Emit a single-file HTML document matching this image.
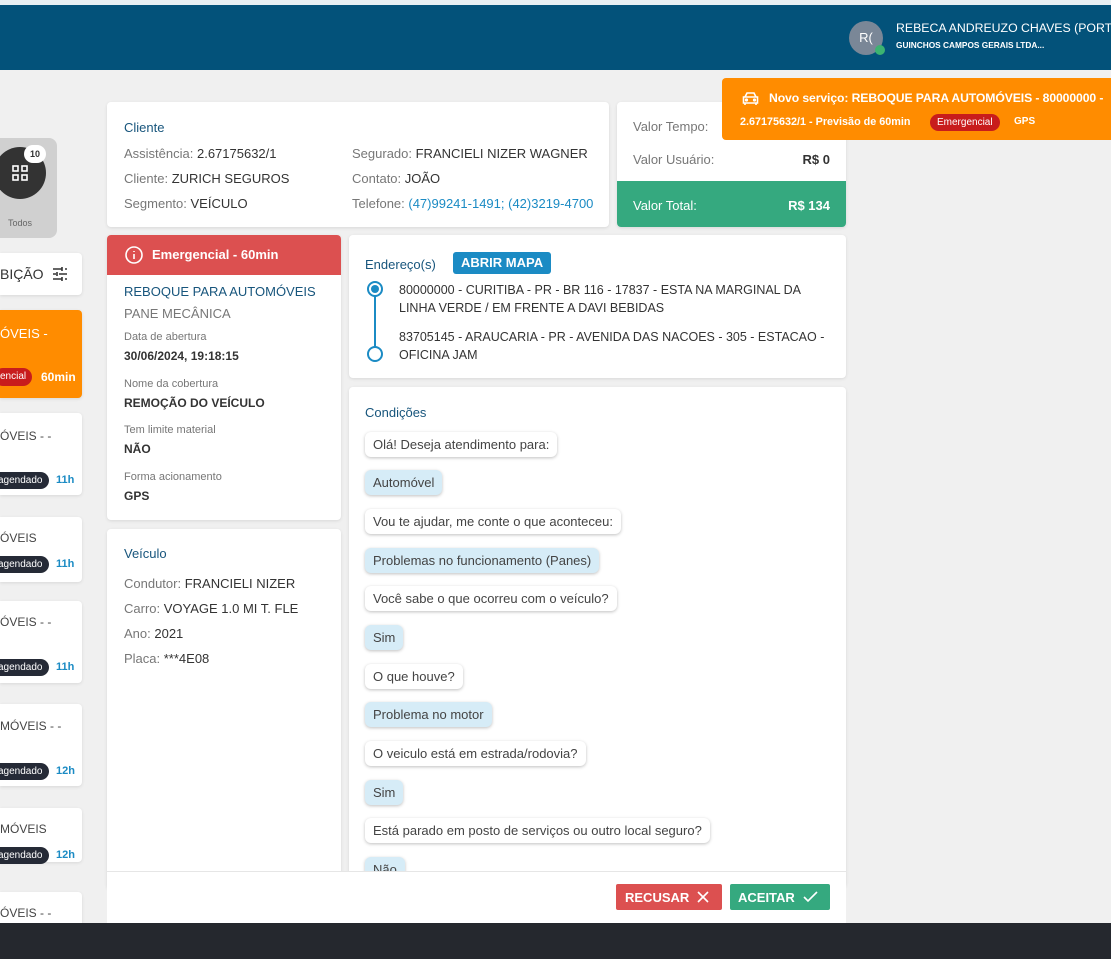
<!DOCTYPE html>
<html><head><meta charset="utf-8">
<style>
*{box-sizing:border-box;margin:0;padding:0}
body{width:1111px;height:959px;overflow:hidden;background:#f0f0f0;font-family:"Liberation Sans",sans-serif;font-size:13px;color:#444;position:relative}
.a{position:absolute}
.card{position:absolute;background:#fff;border-radius:4px;box-shadow:0 1px 3px rgba(0,0,0,.1)}
.t{color:#17557c;font-size:13px}
.g{color:#777}
.dk{color:#333}
.bub{position:absolute;left:365px;background:#fff;border-radius:6px;box-shadow:0 1px 3px rgba(0,0,0,.25);padding:0 8px;height:25px;line-height:25px;font-size:13px;color:#444;white-space:nowrap}
.ans{background:#d6ecf7;color:#444}
.side{position:absolute;left:0;width:82px;background:#fff;border-radius:0 4px 4px 0;box-shadow:0 1px 3px rgba(0,0,0,.1);font-size:12px;color:#444}
.pill{position:absolute;left:-8px;background:#252a36;color:#fff;font-size:10px;height:17px;line-height:17px;border-radius:9px;padding:0 6px 0 6px}
.hr{position:absolute;left:56px;color:#1b8bc4;font-weight:bold;font-size:11px}
</style></head><body>
<div class="a" style="left:0;top:0;width:1111px;height:5px;background:#e8f0f4"></div>
<div class="a" style="left:0;top:5px;width:1111px;height:65px;background:#03527a"></div>
<div class="a" style="left:849px;top:21px;width:34px;height:34px;border-radius:50%;background:#7a8797;color:#fff;font-size:13px;text-align:center;line-height:34px">R(</div>
<div class="a" style="left:875px;top:45px;width:10px;height:10px;border-radius:50%;background:#3cb371"></div>
<div class="a" style="left:896px;top:21px;color:#fff;font-size:12.3px;white-space:nowrap">REBECA ANDREUZO CHAVES (PORT...</div>
<div class="a" style="left:896px;top:40px;color:#fff;font-size:8.3px;font-weight:bold;white-space:nowrap">GUINCHOS CAMPOS GERAIS LTDA...</div>

<!-- sidebar -->
<div class="a" style="left:-20px;top:138px;width:77px;height:100px;background:#d0d0d0;border-radius:8px"></div>
<div class="a" style="left:-6px;top:147px;width:52px;height:52px;border-radius:50%;background:#333"></div>
<svg class="a" style="left:12px;top:165px" width="16" height="16" viewBox="0 0 16 16" fill="none" stroke="#fff" stroke-width="1.6"><rect x="1" y="1" width="5" height="5"/><rect x="10" y="1" width="5" height="5"/><rect x="1" y="10" width="5" height="5"/><rect x="10" y="10" width="5" height="5"/></svg>
<div class="a" style="left:24px;top:145px;width:22px;height:18px;border-radius:9px;background:#fff;color:#333;font-size:9px;font-weight:bold;text-align:center;line-height:18px">10</div>
<div class="a" style="left:8px;top:218px;font-size:9px;color:#666">Todos</div>
<div class="side" style="top:253px;height:42px"><span class="a" style="left:0;top:13px;font-size:14px;color:#333">BIÇÃO</span>
<svg class="a" style="left:51px;top:12px" width="18" height="18" viewBox="0 0 18 18" stroke="#333" stroke-width="1.6"><path d="M2 4h9M14 4h2M11 2v4M2 9h3M8 9h8M6 7v4M2 14h9M14 14h2M11 12v4"/></svg></div>
<div class="side" style="top:310px;height:88px;background:#ff8c00;color:#fff"><span class="a" style="left:0;top:16px;font-size:13px">ÓVEIS -</span>
<span class="a" style="left:-6px;top:58px;background:#c81c1c;height:18px;line-height:18px;padding:0 6px;border-radius:9px;font-size:10px">encial</span><span class="a" style="left:41px;top:60px;font-weight:bold;font-size:12px">60min</span></div>
<div class="side" style="top:413px;height:82px"><span class="a" style="left:0;top:16px">ÓVEIS - -</span><span class="pill" style="top:59px">agendado</span><span class="hr" style="top:61px">11h</span></div>
<div class="side" style="top:517px;height:65px"><span class="a" style="left:0;top:14px">ÓVEIS</span><span class="pill" style="top:39px">agendado</span><span class="hr" style="top:41px">11h</span></div>
<div class="side" style="top:601px;height:82px"><span class="a" style="left:0;top:14px">ÓVEIS - -</span><span class="pill" style="top:58px">agendado</span><span class="hr" style="top:60px">11h</span></div>
<div class="side" style="top:704px;height:82px"><span class="a" style="left:0;top:15px">MÓVEIS - -</span><span class="pill" style="top:59px">agendado</span><span class="hr" style="top:61px">12h</span></div>
<div class="side" style="top:808px;height:54px"><span class="a" style="left:0;top:14px">MÓVEIS</span><span class="pill" style="top:39px">agendado</span><span class="hr" style="top:41px">12h</span></div>
<div class="side" style="top:892px;height:60px"><span class="a" style="left:0;top:14px">ÓVEIS - -</span></div>

<!-- cliente -->
<div class="card" style="left:107px;top:102px;width:502px;height:125px">
<div class="a t" style="left:17px;top:18px">Cliente</div>
<div class="a g" style="left:17px;top:44px">Assistência: <span class="dk">2.67175632/1</span></div>
<div class="a g" style="left:17px;top:69px">Cliente: <span class="dk">ZURICH SEGUROS</span></div>
<div class="a g" style="left:17px;top:94px">Segmento: <span class="dk">VEÍCULO</span></div>
<div class="a g" style="left:245px;top:44px">Segurado: <span class="dk">FRANCIELI NIZER WAGNER</span></div>
<div class="a g" style="left:245px;top:69px">Contato: <span class="dk">JOÃO</span></div>
<div class="a g" style="left:245px;top:94px;white-space:nowrap">Telefone: <span style="color:#1b8bc4">(47)99241-1491; (42)3219-4700</span></div>
</div>
<div class="card" style="left:617px;top:102px;width:229px;height:125px;overflow:hidden">
<div class="a g" style="left:16px;top:17px">Valor Tempo:</div>
<div class="a g" style="left:16px;top:50px">Valor Usuário:</div>
<div class="a dk" style="right:16px;top:50px;font-weight:bold">R$ 0</div>
<div class="a" style="left:0;top:79px;width:229px;height:46px;background:#35a97f;color:#fff"><span class="a" style="left:16px;top:17px">Valor Total:</span><span class="a" style="right:16px;top:17px;font-weight:bold">R$ 134</span></div>
</div>

<!-- toast -->
<div class="a" style="left:722px;top:78px;width:400px;height:62px;background:#ff8c00;border-radius:4px 0 0 4px;color:#fff">
<svg class="a" style="left:20px;top:13px" width="17" height="15" viewBox="0 0 17 15" fill="none" stroke="#fff" stroke-width="1.6"><path d="M3 6l2-4h7l2 4M1.5 6h14v6h-14zM3 12v2M14 12v2"/><circle cx="4.5" cy="9" r=".8" fill="#fff"/><circle cx="12.5" cy="9" r=".8" fill="#fff"/></svg>
<div class="a" style="left:47px;top:13px;font-weight:bold;font-size:12.2px;white-space:nowrap;letter-spacing:-0.1px">Novo serviço: REBOQUE PARA AUTOMÓVEIS - 80000000 -</div>
<div class="a" style="left:18px;top:38px;font-size:10.8px;font-weight:bold;white-space:nowrap">2.67175632/1 - Previsão de 60min</div>
<div class="a" style="left:208px;top:36px;background:#c81c1c;height:17px;line-height:17px;padding:0 7px;border-radius:9px;font-size:10px">Emergencial</div>
<div class="a" style="left:292px;top:38px;font-size:10px;font-weight:bold">GPS</div>
</div>

<!-- emergencial card -->
<div class="card" style="left:107px;top:235px;width:234px;height:285px;overflow:hidden">
<div class="a" style="left:0;top:0;width:234px;height:40px;background:#dc5050;color:#fff">
<svg class="a" style="left:18px;top:11px" width="18" height="18" viewBox="0 0 18 18" fill="none" stroke="#fff" stroke-width="1.6"><circle cx="9" cy="9" r="8"/><path d="M9 8v5M9 5v1"/></svg>
<span class="a" style="left:45px;top:12px;font-weight:bold;font-size:13px">Emergencial - 60min</span></div>
<div class="a t" style="left:17px;top:49px">REBOQUE PARA AUTOMÓVEIS</div>
<div class="a g" style="left:17px;top:71px">PANE MECÂNICA</div>
<div class="a g" style="left:17px;top:96px;font-size:11px">Data de abertura</div>
<div class="a dk" style="left:17px;top:114px;font-weight:bold;font-size:12px">30/06/2024, 19:18:15</div>
<div class="a g" style="left:17px;top:143px;font-size:11px">Nome da cobertura</div>
<div class="a dk" style="left:17px;top:161px;font-weight:bold;font-size:12px">REMOÇÃO DO VEÍCULO</div>
<div class="a g" style="left:17px;top:189px;font-size:11px">Tem limite material</div>
<div class="a dk" style="left:17px;top:207px;font-weight:bold;font-size:12px">NÃO</div>
<div class="a g" style="left:17px;top:236px;font-size:11px">Forma acionamento</div>
<div class="a dk" style="left:17px;top:254px;font-weight:bold;font-size:12px">GPS</div>
</div>
<div class="card" style="left:107px;top:529px;width:234px;height:360px">
<div class="a t" style="left:17px;top:17px">Veículo</div>
<div class="a g" style="left:17px;top:47px;white-space:nowrap">Condutor: <span class="dk">FRANCIELI NIZER</span></div>
<div class="a g" style="left:17px;top:72px;white-space:nowrap">Carro: <span class="dk">VOYAGE 1.0 MI T. FLE</span></div>
<div class="a g" style="left:17px;top:97px">Ano: <span class="dk">2021</span></div>
<div class="a g" style="left:17px;top:122px">Placa: <span class="dk">***4E08</span></div>
</div>

<!-- endereco -->
<div class="card" style="left:349px;top:235px;width:497px;height:143px">
<div class="a t" style="left:16px;top:22px">Endereço(s)</div>
<div class="a" style="left:104px;top:17px;background:#1b8bc4;color:#fff;font-weight:bold;font-size:13px;height:22px;line-height:22px;padding:0 8px;border-radius:3px">ABRIR MAPA</div>
<div class="a" style="left:25px;top:60px;width:2px;height:60px;background:#1b8bc4"></div>
<div class="a" style="left:18px;top:46px;width:16px;height:16px;border-radius:50%;border:2px solid #1b8bc4;background:#fff"></div>
<div class="a" style="left:22px;top:50px;width:8px;height:8px;border-radius:50%;background:#1b8bc4"></div>
<div class="a" style="left:18px;top:111px;width:16px;height:16px;border-radius:50%;border:2px solid #1b8bc4;background:#fff"></div>
<div class="a dk" style="left:50px;top:46px;line-height:18px;font-size:12.5px;width:430px">80000000 - CURITIBA - PR - BR 116 - 17837 - ESTA NA MARGINAL DA LINHA VERDE / EM FRENTE A DAVI BEBIDAS</div>
<div class="a dk" style="left:50px;top:93px;line-height:18px;font-size:12.5px;width:430px">83705145 - ARAUCARIA - PR - AVENIDA DAS NACOES - 305 - ESTACAO - OFICINA JAM</div>
</div>

<!-- condicoes -->
<div class="card" style="left:349px;top:387px;width:497px;height:500px;overflow:hidden">
<div class="a t" style="left:16px;top:18px">Condições</div>
</div>
<div class="bub" style="top:432px">Olá! Deseja atendimento para:</div>
<div class="bub ans" style="top:470px">Automóvel</div>
<div class="bub" style="top:509px">Vou te ajudar, me conte o que aconteceu:</div>
<div class="bub ans" style="top:548px">Problemas no funcionamento (Panes)</div>
<div class="bub" style="top:586px">Você sabe o que ocorreu com o veículo?</div>
<div class="bub ans" style="top:625px">Sim</div>
<div class="bub" style="top:664px">O que houve?</div>
<div class="bub ans" style="top:702px">Problema no motor</div>
<div class="bub" style="top:741px">O veiculo está em estrada/rodovia?</div>
<div class="bub ans" style="top:780px">Sim</div>
<div class="bub" style="top:818px">Está parado em posto de serviços ou outro local seguro?</div>
<div class="bub ans" style="top:857px">Não</div>

<!-- bottom bar -->
<div class="a" style="left:107px;top:871px;width:739px;height:52px;background:#fff;border-top:1px solid #e6e6e6"></div>
<div class="a" style="left:616px;top:884px;width:106px;height:26px;background:#dc5050;border-radius:2px;color:#fff;font-weight:bold;font-size:13px">
<span class="a" style="left:9px;top:6px">RECUSAR</span>
<svg class="a" style="left:81px;top:7px" width="12" height="12" viewBox="0 0 12 12" stroke="#fff" stroke-width="1.6"><path d="M1 1l10 10M11 1L1 11"/></svg></div>
<div class="a" style="left:730px;top:884px;width:100px;height:26px;background:#35a97f;border-radius:2px;color:#fff;font-weight:bold;font-size:13px">
<span class="a" style="left:8px;top:6px">ACEITAR</span>
<svg class="a" style="left:73px;top:7px" width="15" height="12" viewBox="0 0 15 12" fill="none" stroke="#fff" stroke-width="1.6"><path d="M1 6l4 4 9-9"/></svg></div>

<div class="a" style="left:0;top:923px;width:1111px;height:36px;background:#25282e"></div>
</body></html>
